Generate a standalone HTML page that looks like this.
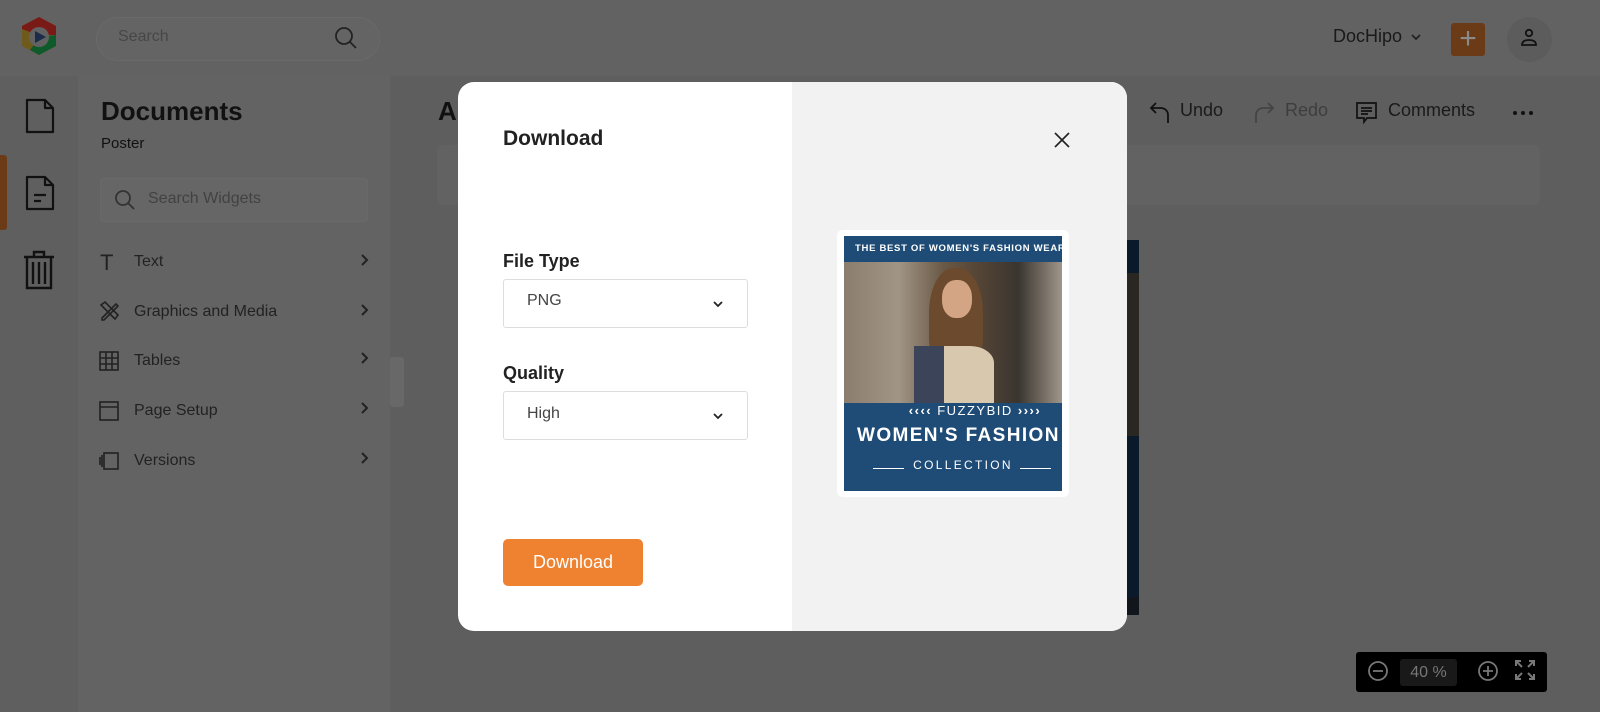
<!DOCTYPE html>
<html><head><meta charset="utf-8"><style>
*{margin:0;padding:0;box-sizing:border-box}
body{width:1600px;height:712px;overflow:hidden;font-family:"Liberation Sans",sans-serif;background:#5e5e5e;position:relative}
.a{position:absolute}
.t{color:#1a1a1a}
</style></head><body>
<div class="a" style="left:0;top:0;width:1600px;height:76px;background:#626262"></div>
<div class="a" style="left:0;top:76px;width:78px;height:636px;background:#5f5f5f"></div>
<div class="a" style="left:78px;top:76px;width:312px;height:636px;background:#636363"></div>
<div class="a" style="left:0;top:155px;width:7px;height:75px;background:#6b3a17;border-radius:0 3px 3px 0"></div>
<svg class="a" style="left:18px;top:15px" width="42" height="42" viewBox="0 0 42 42"><path d="M21 2 L38 11 L38 31 L21 40 L4 31 L4 11Z" fill="#6e5a1a"/><path d="M21 2 L38 11 L38 20 L20 20 L4 14 L4 11Z" fill="#7a1a16"/><path d="M38 20 L38 31 L21 40 L12 35 L22 22Z" fill="#0f5a2a"/><circle cx="21" cy="22" r="10" fill="#626262"/><path d="M17 16 L28 22 L17 28Z" fill="#1a2c4a"/></svg>
<div class="a" style="left:96px;top:17px;width:284px;height:44px;border:1px solid #6a6a6a;border-radius:22px;background:#646464"></div>
<div class="a" style="left:118px;top:28px;font-size:16px;color:#474747">Search</div>
<svg class="a" style="left:334px;top:26px" width="24" height="24" viewBox="0 0 24 24" fill="none" stroke="#222" stroke-width="1.8"><circle cx="10" cy="10" r="8"/><path d="M16 16l6 6"/></svg>
<div class="a t" style="left:1333px;top:26px;font-size:18px">DocHipo</div>
<svg class="a" style="left:1410px;top:32px" width="12" height="10" viewBox="0 0 12 10" fill="none" stroke="#222" stroke-width="1.8"><path d="M2 3l4 4 4-4"/></svg>
<div class="a" style="left:1451px;top:23px;width:34px;height:33px;background:#6b3a17;border-radius:3px;color:#8a8a8a;font-size:30px;line-height:31px;text-align:center">+</div>
<div class="a" style="left:1507px;top:17px;width:45px;height:45px;border-radius:50%;background:#5c5c5c"></div>
<svg class="a" style="left:1519px;top:28px" width="20" height="20" viewBox="0 0 20 20" fill="none" stroke="#111" stroke-width="1.8"><circle cx="10" cy="5" r="3.2"/><path d="M3 17c0-4 3-5 7-5s7 1 7 5z"/></svg>
<svg class="a" style="left:24px;top:98px" width="32" height="36" viewBox="0 0 32 36" fill="none" stroke="#111" stroke-width="2.2" stroke-linejoin="round"><path d="M3 2h18l8 8v24H3z"/><path d="M21 2v8h8"/></svg>
<svg class="a" style="left:24px;top:175px" width="32" height="36" viewBox="0 0 32 36" fill="none" stroke="#111" stroke-width="2.2" stroke-linejoin="round"><path d="M3 2h18l8 8v24H3z"/><path d="M21 2v8h8M10 20h12M10 26h7"/></svg>
<svg class="a" style="left:22px;top:250px" width="34" height="40" viewBox="0 0 34 40" fill="none" stroke="#111" stroke-width="2.4"><path d="M2 7h30M12 7V2h10v5M5 7v31h24V7M11 12v22M17 12v22M23 12v22"/></svg>
<div class="a" style="left:101px;top:96px;font-size:26px;font-weight:bold;color:#111">Documents</div>
<div class="a" style="left:101px;top:135px;font-size:15px;color:#111">Poster</div>
<div class="a" style="left:100px;top:178px;width:268px;height:44px;border-radius:4px;background:#666;border:1px solid #696969"></div>
<svg class="a" style="left:114px;top:189px" width="22" height="22" viewBox="0 0 22 22" fill="none" stroke="#333" stroke-width="1.8"><circle cx="9" cy="9" r="7"/><path d="M14 14l6 6"/></svg>
<div class="a" style="left:148px;top:190px;font-size:16px;color:#424242">Search Widgets</div>
<div class="a" style="left:100px;top:250px;font-size:22px;color:#222">T</div>
<div class="a" style="left:134px;top:253px;font-size:16px;color:#222">Text</div>
<div class="a" style="left:134px;top:303px;font-size:16px;color:#222">Graphics and Media</div>
<div class="a" style="left:134px;top:352px;font-size:16px;color:#222">Tables</div>
<div class="a" style="left:134px;top:402px;font-size:16px;color:#222">Page Setup</div>
<div class="a" style="left:134px;top:452px;font-size:16px;color:#222">Versions</div>
<svg class="a" style="left:98px;top:300px" width="22" height="22" viewBox="0 0 22 22" fill="none" stroke="#222" stroke-width="1.6"><path d="M4 18L16 6l2-2 2 2-2 2L6 20H4zM3 5l4-3 13 13-3 4z"/></svg>
<svg class="a" style="left:98px;top:350px" width="22" height="22" viewBox="0 0 22 22" fill="none" stroke="#222" stroke-width="1.6"><rect x="2" y="2" width="18" height="18"/><path d="M2 8h18M2 14h18M8 2v18M14 2v18"/></svg>
<svg class="a" style="left:98px;top:400px" width="22" height="22" viewBox="0 0 22 22" fill="none" stroke="#222" stroke-width="1.6"><rect x="2" y="2" width="18" height="18"/><path d="M2 7h18"/></svg>
<svg class="a" style="left:98px;top:450px" width="22" height="22" viewBox="0 0 22 22" fill="none" stroke="#222" stroke-width="1.6"><rect x="6" y="3" width="14" height="16"/><path d="M4 5v12M2 7v8"/></svg>
<svg class="a" style="left:358px;top:252px" width="14" height="220" viewBox="0 0 14 220" fill="none" stroke="#222" stroke-width="2"><path d="M4 3l5 5-5 5M4 53l5 5-5 5M4 101l5 5-5 5M4 151l5 5-5 5M4 201l5 5-5 5"/></svg>
<div class="a" style="left:390px;top:357px;width:14px;height:50px;background:#686868;border-radius:3px"></div>
<div class="a" style="left:438px;top:96px;font-size:26px;font-weight:bold;color:#111">A</div>
<div class="a" style="left:437px;top:145px;width:1103px;height:60px;background:#626262;border-radius:6px"></div>
<svg class="a" style="left:1148px;top:100px" width="24" height="24" viewBox="0 0 24 24" fill="none" stroke="#111" stroke-width="1.8"><path d="M8 3L3 8l5 5M3 8h10a7 7 0 0 1 7 7v8"/></svg>
<div class="a t" style="left:1180px;top:100px;font-size:18px">Undo</div>
<svg class="a" style="left:1252px;top:100px" width="24" height="24" viewBox="0 0 24 24" fill="none" stroke="#444" stroke-width="1.8"><path d="M16 3l5 5-5 5M21 8H11a7 7 0 0 0-7 7v8"/></svg>
<div class="a" style="left:1285px;top:100px;font-size:18px;color:#3e3e3e">Redo</div>
<svg class="a" style="left:1355px;top:101px" width="24" height="24" viewBox="0 0 24 24" fill="none" stroke="#111" stroke-width="1.7"><path d="M2 2h19v15h-9l-3 4v-4H2z M6 7h11M6 10h11M6 13h7"/></svg>
<div class="a t" style="left:1388px;top:100px;font-size:18px">Comments</div>
<svg class="a" style="left:1512px;top:110px" width="22" height="6" viewBox="0 0 22 6" fill="#111"><circle cx="3" cy="3" r="2"/><circle cx="11" cy="3" r="2"/><circle cx="19" cy="3" r="2"/></svg>
<div class="a" style="left:1127px;top:240px;width:12px;height:375px;background:#0a1a2a"></div>
<div class="a" style="left:1127px;top:273px;width:12px;height:163px;background:#2a2622"></div>
<div class="a" style="left:1127px;top:597px;width:12px;height:18px;background:#11161d"></div>
<div class="a" style="left:1356px;top:652px;width:191px;height:40px;background:#000;border-radius:3px"></div>
<svg class="a" style="left:1366px;top:659px" width="24" height="24" viewBox="0 0 24 24" fill="none" stroke="#777" stroke-width="1.8"><circle cx="12" cy="12" r="9"/><path d="M7 12h10"/></svg>
<div class="a" style="left:1400px;top:659px;width:57px;height:27px;background:#191919;border-radius:3px;color:#777;font-size:16px;line-height:27px;text-align:center">40 %</div>
<svg class="a" style="left:1476px;top:659px" width="24" height="24" viewBox="0 0 24 24" fill="none" stroke="#777" stroke-width="1.8"><circle cx="12" cy="12" r="9"/><path d="M7 12h10M12 7v10"/></svg>
<svg class="a" style="left:1514px;top:659px" width="22" height="22" viewBox="0 0 22 22" fill="none" stroke="#777" stroke-width="2"><path d="M2 7V2h5M2 2l6 6M15 2h5v5M20 2l-6 6M2 15v5h5M2 20l6-6M20 15v5h-5M20 20l-6-6"/></svg>
<div class="a" style="left:458px;top:82px;width:669px;height:549px;background:#fff;border-radius:16px;overflow:hidden">
 <div class="a" style="left:334px;top:0;width:335px;height:549px;background:#f2f2f2"></div>
</div>
<div class="a" style="left:503px;top:127px;font-size:21px;font-weight:bold;color:#222">Download</div>
<svg class="a" style="left:1053px;top:131px" width="18" height="18" viewBox="0 0 18 18" stroke="#222" stroke-width="1.6"><path d="M2 2l14 14M16 2L2 16"/></svg>
<div class="a" style="left:503px;top:251px;font-size:18px;font-weight:bold;color:#222">File Type</div>
<div class="a" style="left:503px;top:279px;width:245px;height:49px;border:1px solid #ddd;border-radius:3px"></div>
<div class="a" style="left:527px;top:292px;font-size:16px;color:#444">PNG</div>
<svg class="a" style="left:712px;top:299px" width="12" height="10" viewBox="0 0 12 10" fill="none" stroke="#222" stroke-width="1.8"><path d="M2 3l4 4 4-4"/></svg>
<div class="a" style="left:503px;top:363px;font-size:18px;font-weight:bold;color:#222">Quality</div>
<div class="a" style="left:503px;top:391px;width:245px;height:49px;border:1px solid #ddd;border-radius:3px"></div>
<div class="a" style="left:527px;top:405px;font-size:16px;color:#444">High</div>
<svg class="a" style="left:712px;top:411px" width="12" height="10" viewBox="0 0 12 10" fill="none" stroke="#222" stroke-width="1.8"><path d="M2 3l4 4 4-4"/></svg>
<div class="a" style="left:503px;top:539px;width:140px;height:47px;background:#ef8231;border-radius:5px;color:#fff;font-size:18px;line-height:47px;text-align:center">Download</div>
<div class="a" style="left:837px;top:230px;width:232px;height:267px;background:#fff;border-radius:6px"></div>
<div class="a" style="left:844px;top:236px;width:218px;height:255px;background:#1f4c77;overflow:hidden">
 <div class="a" style="left:11px;top:7px;color:#fff;font-size:9.5px;font-weight:bold;letter-spacing:0.7px;white-space:nowrap">THE BEST OF WOMEN'S FASHION WEAR</div>
 <div class="a" style="left:0;top:26px;width:218px;height:141px;background:linear-gradient(90deg,#8a7d6e 0%,#a19585 25%,#6b5a48 45%,#574636 60%,#3a3530 80%,#a0968a 100%)"></div>
 <div class="a" style="left:85px;top:32px;width:54px;height:100px;border-radius:45% 45% 30% 30%;background:#6b4a2e"></div>
 <div class="a" style="left:98px;top:44px;width:30px;height:38px;border-radius:45%;background:#d4a584"></div>
 <div class="a" style="left:70px;top:110px;width:80px;height:57px;background:#d8c8ae;border-radius:30% 30% 0 0"></div>
 <div class="a" style="left:70px;top:110px;width:30px;height:57px;background:#3b4458"></div>
 <div class="a" style="left:0;top:167px;width:262px;text-align:center;color:#fff;font-size:13px;letter-spacing:1.5px;font-weight:bold">‹‹‹‹ <span style="font-weight:normal">FUZZYBID</span> ››››</div>
 <div class="a" style="left:13px;top:189px;color:#fff;font-size:19px;font-weight:bold;letter-spacing:1.4px;white-space:nowrap">WOMEN'S FASHION</div>
 <div class="a" style="left:29px;top:232px;width:31px;height:1px;background:#fff"></div>
 <div class="a" style="left:176px;top:232px;width:31px;height:1px;background:#fff"></div>
 <div class="a" style="left:66px;top:222px;width:106px;text-align:center;color:#fff;font-size:12px;letter-spacing:2.3px;white-space:nowrap">COLLECTION</div>
</div>
</body></html>
